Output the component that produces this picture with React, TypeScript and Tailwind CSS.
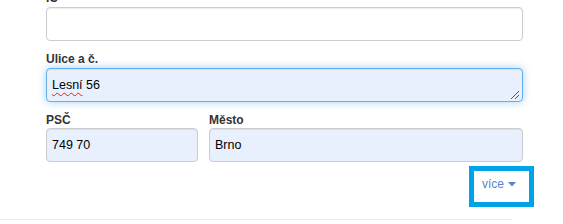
import React from "react";

const font = { fontFamily: '"Liberation Sans", Arial, sans-serif' };

export default function App() {
  return (
    <div className="h-[224px] w-[563px] overflow-hidden bg-white text-[#333]" style={font}>
      <div className="-mt-[10px] pl-[46px] w-[523px]">
        <label className="block text-[12px] leading-[16px] font-bold h-[16px] mb-px">IČ</label>
        <div className="h-[34px] rounded-[4px] border border-[#cccccc] bg-white shadow-[inset_0_1px_1px_rgba(0,0,0,0.075)]" />

        <label className="block mt-[10px] text-[12px] leading-[16px] font-bold h-[16px] mb-px">Ulice a č.</label>
        <div className="relative h-[34px] rounded-[4px] border border-[#66afe9] bg-[#e8f0fe] shadow-[inset_0_1px_1px_rgba(0,0,0,0.075),0_0_8px_rgba(102,175,233,0.6)] flex items-center px-[5px] text-[12.5px] text-black">
          <span>
            <span className="underline decoration-wavy decoration-[#e02020] decoration-1 underline-offset-[3px]">Lesní</span> 56
          </span>
          <svg className="absolute right-[2px] bottom-[1px]" width="10" height="10" viewBox="0 0 10 10">
            <line x1="1" y1="9" x2="9" y2="1" stroke="#555" strokeWidth="1" />
            <line x1="5" y1="9" x2="9" y2="5" stroke="#555" strokeWidth="1" />
          </svg>
        </div>

        <div className="mt-[10px] grid grid-cols-[152px_1fr] gap-x-[11px]">
          <div>
            <label className="block text-[12px] leading-[16px] font-bold h-[16px]">PSČ</label>
            <div className="h-[34px] rounded-[4px] border border-[#cccccc] bg-[#e8f0fe] shadow-[inset_0_1px_1px_rgba(0,0,0,0.075)] flex items-center px-[5px] text-[12.5px] text-black">
              749 70
            </div>
          </div>
          <div>
            <label className="block text-[12px] leading-[16px] font-bold h-[16px]">Město</label>
            <div className="h-[34px] rounded-[4px] border border-[#cccccc] bg-[#e8f0fe] shadow-[inset_0_1px_1px_rgba(0,0,0,0.075)] flex items-center px-[5px] text-[12.5px] text-black">
              Brno
            </div>
          </div>
        </div>

        <div className="mt-[14px] flex justify-end pr-[7px]">
          <div className="relative">
            <a className="flex items-center gap-[4px] text-[12px] leading-[16px] text-[#5585c8]">
              více
              <svg width="8" height="5" viewBox="0 0 8 5" className="mt-[1px]">
                <path d="M0 0 L8 0 L4 4.5 Z" fill="#5585c8" />
              </svg>
            </a>
            <div className="absolute left-[-13px] top-[-10px] w-[65px] h-[41px] border-[5px] border-[#00a2e8] pointer-events-none" />
          </div>
        </div>
      </div>
      <div className="mt-[27px] w-[512px] border-t border-[#ececec]" />
    </div>
  );
}
